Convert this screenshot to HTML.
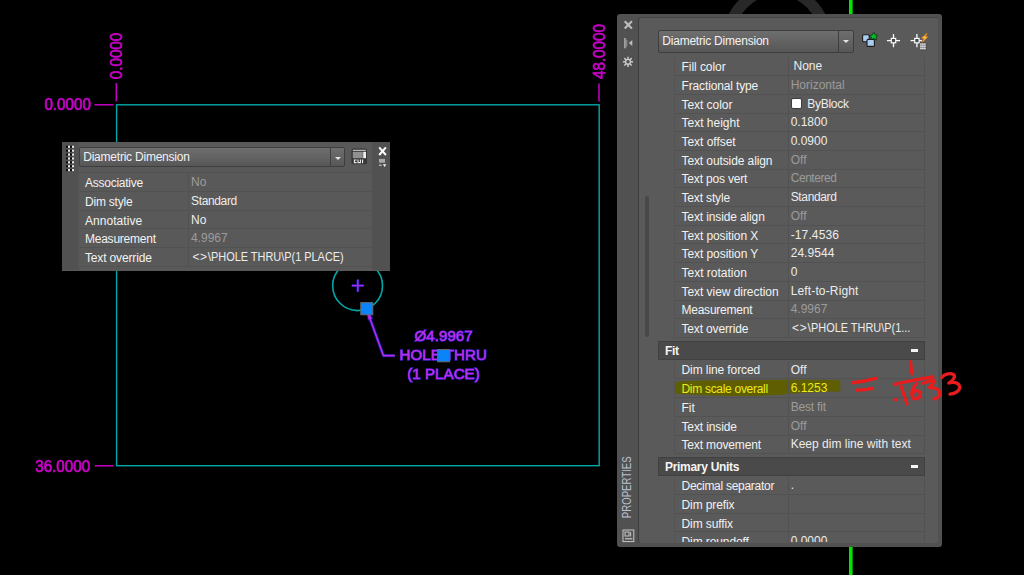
<!DOCTYPE html>
<html>
<head>
<meta charset="utf-8">
<title>AutoCAD - Diametric Dimension</title>
<style>
html,body{margin:0;padding:0;background:#000;}
body{width:1024px;height:575px;overflow:hidden;position:relative;font-family:"Liberation Sans",sans-serif;font-size:12px;color:#f0f0f0;}
#draw{position:absolute;left:0;top:0;width:1024px;height:575px;will-change:transform;}
#anno{position:absolute;left:0;top:0;width:1024px;height:575px;pointer-events:none;}
.dim{font-family:"Liberation Sans",sans-serif;font-size:15.2px;fill:#c800c8;stroke:#c800c8;stroke-width:0.7px;}
.selh{font-family:"Liberation Sans",sans-serif;font-size:15.2px;fill:#1616b0;stroke:#1616b0;stroke-width:1.7px;}
.sel{font-family:"Liberation Sans",sans-serif;font-size:15.2px;fill:#ba2ee6;stroke:#ba2ee6;stroke-width:0.45px;}

/* generic rows */
.row{position:absolute;height:17.7px;border-bottom:1px solid #525252;border-right:1px solid #525252;border-left:1px solid #545454;margin-left:-1px;box-sizing:content-box;white-space:nowrap;}
.row .l,.row .v{position:absolute;top:0.8px;line-height:19px;font-size:12px;color:#f2f2f2;}
.row .v{color:#ececec;top:-0.2px;}
.row .v.ro{color:#9c9c9c;}
.row .sep{position:absolute;top:0;width:1px;height:18.7px;background:#525252;}
.row.hl .l,.row.hl .v{color:#ecea18;}
.sq{display:inline-block;transform:scaleX(0.91);transform-origin:0 50%;}
.sw{display:inline-block;width:9px;height:9px;background:#fff;border:1px solid #3c3c3c;border-radius:2px;vertical-align:-1px;margin:0 5px 0 0.6px;}

/* Quick properties */
#qp{position:absolute;left:62px;top:141.8px;width:328.2px;height:128.8px;background:#595959;}
#qp .lstrip{position:absolute;left:0;top:0;width:17px;height:128px;background:#515151;}
#qp .rstrip{position:absolute;left:310px;top:0;width:18px;height:128px;background:#515151;}
.combo{position:absolute;box-sizing:border-box;border:1px solid #3e3e3e;border-radius:2px;background:linear-gradient(#6e6e6e,#575757);}
.combo .t{position:absolute;left:4px;top:0;font-size:12px;color:#f2f2f2;white-space:nowrap;}
.combo .btn{position:absolute;right:0;top:0;bottom:0;width:13px;border-left:1px solid #3e3e3e;}
.combo .btn:after{content:"";position:absolute;left:4px;top:9px;border-left:3px solid transparent;border-right:3px solid transparent;border-top:3px solid #e6e6e6;}

/* Properties palette */
#pp{position:absolute;left:617px;top:14px;width:325px;height:533px;background:#515151;border-radius:3px;}
#pp .inner{position:absolute;left:20.6px;top:2.6px;width:299.6px;height:525.6px;background:#5a5a5a;border-left:1.4px solid #3d3d3d;border-top:1.4px solid #444;border-radius:3px 2px 3px 3px;overflow:hidden;}
#pp .clip{position:absolute;left:0;top:0;width:325px;height:528px;overflow:hidden;}
.hdr{position:absolute;left:41px;width:265.4px;height:17.1px;background:#4a4a4a;border:1px solid #404040;box-sizing:content-box;}
.hdr span{position:absolute;left:6px;top:0.3px;line-height:18px;font-weight:bold;font-size:12px;color:#f4f4f4;letter-spacing:-0.3px;}
.hdr i{position:absolute;right:6.6px;top:7.3px;width:6.4px;height:2.5px;background:#f4f4f4;}
.sbar{position:absolute;left:28px;top:182px;width:4px;height:141px;background:#484848;border-radius:2px;}
.vt{position:absolute;left:-28px;top:476px;width:80px;height:14px;line-height:14px;font-size:11.5px;color:#b4bcd0;transform:rotate(-90deg);transform-origin:50% 50%;text-align:left;letter-spacing:0.2px;}
</style>
</head>
<body>

<svg id="draw" width="1024" height="575" viewBox="0 0 1024 575">
  <!-- dark ring behind palette -->
  <circle cx="777" cy="37.7" r="48" fill="none" stroke="#282828" stroke-width="11"/>
  <!-- green line -->
  <rect x="849" y="0" width="3.6" height="575" fill="#00e400"/>
  <!-- plate outline -->
  <rect x="116.6" y="104.8" width="482.6" height="360.9" fill="none" stroke="#00a8a8" stroke-width="1.4"/>
  <!-- ordinate dims -->
  <g stroke="#c400c4" stroke-width="1.5" fill="none">
    <line x1="94.5" y1="104.8" x2="113.5" y2="104.8"/>
    <line x1="116.3" y1="83" x2="116.3" y2="101.5"/>
    <line x1="599" y1="83.5" x2="599" y2="101.5"/>
    <line x1="94.8" y1="465.8" x2="113.6" y2="465.8"/>
  </g>
  <text class="dim" transform="translate(44.4 110.4) scale(1 1.07)">0.0000</text>
  <text class="dim" transform="translate(35.2 471.6) scale(1 1.07)">36.0000</text>
  <text class="dim" transform="translate(122 79.2) rotate(-90) scale(1 1.07)">0.0000</text>
  <text class="dim" transform="translate(605 79) rotate(-90) scale(1 1.07)">48.0000</text>
  <!-- hole -->
  <circle cx="357.6" cy="285.7" r="24.9" fill="none" stroke="#00a8a8" stroke-width="1.6"/>
  <g stroke="#14149a" stroke-width="3" style="filter:blur(0.5px)">
    <line x1="351.8" y1="285.6" x2="363.8" y2="285.6"/>
    <line x1="357.8" y1="279.6" x2="357.8" y2="291.8"/>
  </g>
  <g stroke="#a030e4" stroke-width="1.5">
    <line x1="351.8" y1="285.6" x2="363.8" y2="285.6"/>
    <line x1="357.8" y1="279.6" x2="357.8" y2="291.8"/>
  </g>
  <!-- leader -->
  <g id="leader">
    <polyline points="369,316 383.4,355.6 394.8,355.6" fill="none" stroke="#14149a" stroke-width="3.4" stroke-linejoin="round" style="filter:blur(0.5px)"/>
    <polygon points="366.5,308.5 372.2,318.4 368.5,319.7" fill="#14149a" stroke="#14149a" stroke-width="1.8" style="filter:blur(0.5px)"/>
    <polyline points="369,316 383.4,355.6 394.8,355.6" fill="none" stroke="#b82ce4" stroke-width="1.6" stroke-linejoin="round"/>
    <polygon points="366.5,308.5 372.2,318.4 368.5,319.7" fill="#b82ce4"/>
  </g>
  <g id="seltext">
    <g style="filter:blur(0.4px)" class="selh">
      <text transform="translate(443.6 340.7) scale(1 1)" text-anchor="middle">Ø4.9967</text>
      <text transform="translate(443.2 360) scale(1 1)" text-anchor="middle">HOLE THRU</text>
      <text transform="translate(443.5 379.2) scale(1 1)" text-anchor="middle">(1 PLACE)</text>
    </g>
    <text class="sel" transform="translate(443.6 340.7) scale(1 1)" text-anchor="middle">Ø4.9967</text>
    <text class="sel" transform="translate(443.2 360) scale(1 1)" text-anchor="middle">HOLE THRU</text>
    <text class="sel" transform="translate(443.5 379.2) scale(1 1)" text-anchor="middle">(1 PLACE)</text>
  </g>
  <!-- grips -->
  <rect x="360.8" y="302.6" width="12" height="12.2" fill="#0a84fa" stroke="#6a6a6a" stroke-width="1"/>
  <rect x="437.6" y="349.6" width="12" height="12.2" fill="#0a84fa" stroke="#6a6a6a" stroke-width="1"/>
</svg>

<!-- Quick Properties -->
<div id="qp">
  <div class="lstrip"></div>
  <div class="rstrip"></div>
  <svg style="position:absolute;left:0;top:0" width="328" height="34" viewBox="62 142 328 34">
    <g>
      <rect x="66.0" y="145.8" width="2" height="2" fill="#0a0a0a"/>
      <rect x="68.0" y="145.8" width="2" height="2" fill="#e8e8e8"/>
      <rect x="70.0" y="145.8" width="2" height="2" fill="#0a0a0a"/>
      <rect x="72.0" y="145.8" width="2" height="2" fill="#e8e8e8"/>
      <rect x="66.0" y="149.7" width="2" height="2" fill="#0a0a0a"/>
      <rect x="68.0" y="149.7" width="2" height="2" fill="#e8e8e8"/>
      <rect x="70.0" y="149.7" width="2" height="2" fill="#0a0a0a"/>
      <rect x="72.0" y="149.7" width="2" height="2" fill="#e8e8e8"/>
      <rect x="66.0" y="153.6" width="2" height="2" fill="#0a0a0a"/>
      <rect x="68.0" y="153.6" width="2" height="2" fill="#e8e8e8"/>
      <rect x="70.0" y="153.6" width="2" height="2" fill="#0a0a0a"/>
      <rect x="72.0" y="153.6" width="2" height="2" fill="#e8e8e8"/>
      <rect x="66.0" y="157.5" width="2" height="2" fill="#0a0a0a"/>
      <rect x="68.0" y="157.5" width="2" height="2" fill="#e8e8e8"/>
      <rect x="70.0" y="157.5" width="2" height="2" fill="#0a0a0a"/>
      <rect x="72.0" y="157.5" width="2" height="2" fill="#e8e8e8"/>
      <rect x="66.0" y="161.3" width="2" height="2" fill="#0a0a0a"/>
      <rect x="68.0" y="161.3" width="2" height="2" fill="#e8e8e8"/>
      <rect x="70.0" y="161.3" width="2" height="2" fill="#0a0a0a"/>
      <rect x="72.0" y="161.3" width="2" height="2" fill="#e8e8e8"/>
      <rect x="66.0" y="165.2" width="2" height="2" fill="#0a0a0a"/>
      <rect x="68.0" y="165.2" width="2" height="2" fill="#e8e8e8"/>
      <rect x="70.0" y="165.2" width="2" height="2" fill="#0a0a0a"/>
      <rect x="72.0" y="165.2" width="2" height="2" fill="#e8e8e8"/>
      <rect x="66.0" y="169.1" width="2" height="2" fill="#0a0a0a"/>
      <rect x="68.0" y="169.1" width="2" height="2" fill="#e8e8e8"/>
      <rect x="70.0" y="169.1" width="2" height="2" fill="#0a0a0a"/>
      <rect x="72.0" y="169.1" width="2" height="2" fill="#e8e8e8"/>
    </g>
    <!-- CUI -->
    <rect x="351.4" y="148.6" width="15.6" height="15.6" rx="2" fill="#363636"/>
    <rect x="352.8" y="149.8" width="13" height="1" fill="#d8d8d8"/>
    <rect x="352.8" y="151.8" width="10" height="6.4" fill="#909090"/>
    <rect x="363.2" y="151.8" width="2.8" height="6.4" fill="#f0f0f0"/>
    <g fill="none" stroke="#f0f0f0" stroke-width="1.1">
      <path d="M356.6 160 H354.4 V162.6 H356.6"/>
      <path d="M358 159.6 V162.6 H360.4 V159.6"/>
      <path d="M362.6 159.6 V163.2"/>
    </g>
    <!-- X -->
    <g stroke="#ffffff" stroke-width="2" stroke-linecap="butt">
      <line x1="379.2" y1="147.3" x2="385.9" y2="155"/><line x1="385.9" y1="147.3" x2="379.2" y2="155"/>
    </g>
    <!-- options -->
    <rect x="379" y="158.9" width="6" height="3.8" fill="#a8a8a8"/>
    <rect x="379" y="164.6" width="2.6" height="1.3" fill="#c0c0c0"/>
    <polygon points="382.8,164.2 386.4,164.2 384.6,167" fill="#f0f0f0"/>
  </svg>
  <div class="combo" style="left:17px;top:5px;width:266px;height:20.4px;"><span class="t" style="left:3.2px;top:0.6px;line-height:19px;letter-spacing:-0.22px">Diametric Dimension</span><span class="btn"></span></div>
<div class="row" style="top:31.50px;left:17px;width:293px;border-top:1px solid #525252;margin-top:-1px"><span class="l" style="left:6px;letter-spacing:-0.25px">Associative</span><b class="sep" style="left:109px"></b><span class="v ro" style="left:112px;letter-spacing:0px">No</span></div>
<div class="row" style="top:50.21px;left:17px;width:293px"><span class="l" style="left:6px;letter-spacing:-0.22px">Dim style</span><b class="sep" style="left:109px"></b><span class="v" style="left:112px;letter-spacing:-0.35px">Standard</span></div>
<div class="row" style="top:68.92px;left:17px;width:293px"><span class="l" style="left:6px;letter-spacing:0.05px">Annotative</span><b class="sep" style="left:109px"></b><span class="v" style="left:112px;letter-spacing:0px">No</span></div>
<div class="row" style="top:87.63px;left:17px;width:293px"><span class="l" style="left:6px;letter-spacing:-0.24px">Measurement</span><b class="sep" style="left:109px"></b><span class="v ro" style="left:112px;letter-spacing:0px">4.9967</span></div>
<div class="row" style="top:106.34px;left:17px;width:293px"><span class="l" style="left:6px;letter-spacing:-0.15px">Text override</span><b class="sep" style="left:109px"></b><span class="v" style="left:113.4px;letter-spacing:0px"><span style="letter-spacing:0.7px">&lt;&gt;</span><span style="letter-spacing:0.1px">\</span><span class="sq">PHOLE THRU\P(1 PLACE)</span></span></div>
</div>

<!-- Properties palette -->
<div id="pp">
  <div class="inner"></div>
  <div class="clip">
  <div class="combo" style="left:40.8px;top:16.1px;width:196.6px;height:23px;"><span class="t" style="left:3.5px;line-height:21.4px;letter-spacing:-0.22px">Diametric Dimension</span><span class="btn" style="width:14px"></span></div>
  <div class="sbar"></div>
<div class="row" style="top:43.40px;left:58px;width:249.39999999999998px"><span class="l" style="left:6.5px;letter-spacing:-0.05px">Fill color</span><b class="sep" style="left:113.20000000000005px"></b><span class="v" style="left:118.50000000000004px;letter-spacing:0px">None</span></div>
<div class="row" style="top:62.11px;left:58px;width:249.39999999999998px"><span class="l" style="left:6.5px;letter-spacing:-0.14px">Fractional type</span><b class="sep" style="left:113.20000000000005px"></b><span class="v ro" style="left:115.70000000000005px;letter-spacing:0px">Horizontal</span></div>
<div class="row" style="top:80.82px;left:58px;width:249.39999999999998px"><span class="l" style="left:6.5px;letter-spacing:-0.05px">Text color</span><b class="sep" style="left:113.20000000000005px"></b><span class="v" style="left:115.70000000000005px;letter-spacing:-0.28px"><i class="sw"></i>ByBlock</span></div>
<div class="row" style="top:99.53px;left:58px;width:249.39999999999998px"><span class="l" style="left:6.5px;letter-spacing:0px">Text height</span><b class="sep" style="left:113.20000000000005px"></b><span class="v" style="left:115.70000000000005px;letter-spacing:0px">0.1800</span></div>
<div class="row" style="top:118.24px;left:58px;width:249.39999999999998px"><span class="l" style="left:6.5px;letter-spacing:-0.03px">Text offset</span><b class="sep" style="left:113.20000000000005px"></b><span class="v" style="left:115.70000000000005px;letter-spacing:0px">0.0900</span></div>
<div class="row" style="top:136.95px;left:58px;width:249.39999999999998px"><span class="l" style="left:6.5px;letter-spacing:-0.1px">Text outside align</span><b class="sep" style="left:113.20000000000005px"></b><span class="v ro" style="left:115.70000000000005px;letter-spacing:0px">Off</span></div>
<div class="row" style="top:155.66px;left:58px;width:249.39999999999998px"><span class="l" style="left:6.5px;letter-spacing:-0.18px">Text pos vert</span><b class="sep" style="left:113.20000000000005px"></b><span class="v ro" style="left:115.70000000000005px;letter-spacing:-0.45px">Centered</span></div>
<div class="row" style="top:174.37px;left:58px;width:249.39999999999998px"><span class="l" style="left:6.5px;letter-spacing:-0.16px">Text style</span><b class="sep" style="left:113.20000000000005px"></b><span class="v" style="left:115.70000000000005px;letter-spacing:-0.35px">Standard</span></div>
<div class="row" style="top:193.08px;left:58px;width:249.39999999999998px"><span class="l" style="left:6.5px;letter-spacing:-0.13px">Text inside align</span><b class="sep" style="left:113.20000000000005px"></b><span class="v ro" style="left:115.70000000000005px;letter-spacing:0px">Off</span></div>
<div class="row" style="top:211.79px;left:58px;width:249.39999999999998px"><span class="l" style="left:6.5px;letter-spacing:-0.09px">Text position X</span><b class="sep" style="left:113.20000000000005px"></b><span class="v" style="left:115.70000000000005px;letter-spacing:0.12px">-17.4536</span></div>
<div class="row" style="top:230.50px;left:58px;width:249.39999999999998px"><span class="l" style="left:6.5px;letter-spacing:-0.07px">Text position Y</span><b class="sep" style="left:113.20000000000005px"></b><span class="v" style="left:115.70000000000005px;letter-spacing:0.04px">24.9544</span></div>
<div class="row" style="top:249.21px;left:58px;width:249.39999999999998px"><span class="l" style="left:6.5px;letter-spacing:0px">Text rotation</span><b class="sep" style="left:113.20000000000005px"></b><span class="v" style="left:115.70000000000005px;letter-spacing:0px">0</span></div>
<div class="row" style="top:267.92px;left:58px;width:249.39999999999998px"><span class="l" style="left:6.5px;letter-spacing:-0.05px">Text view direction</span><b class="sep" style="left:113.20000000000005px"></b><span class="v" style="left:115.70000000000005px;letter-spacing:0.14px">Left-to-Right</span></div>
<div class="row" style="top:286.63px;left:58px;width:249.39999999999998px"><span class="l" style="left:6.5px;letter-spacing:-0.24px">Measurement</span><b class="sep" style="left:113.20000000000005px"></b><span class="v ro" style="left:115.70000000000005px;letter-spacing:0px">4.9967</span></div>
<div class="row" style="top:305.34px;left:58px;width:249.39999999999998px"><span class="l" style="left:6.5px;letter-spacing:-0.15px">Text override</span><b class="sep" style="left:113.20000000000005px"></b><span class="v" style="left:117.10000000000005px;letter-spacing:0px"><span style="letter-spacing:0.7px">&lt;&gt;</span><span style="letter-spacing:0.1px">\</span><span class="sq">PHOLE THRU\P(1...</span></span></div>
  <div class="hdr" style="top:326.8px"><span>Fit</span><i></i></div>
  <svg style="position:absolute;left:0;top:0" width="325" height="533" viewBox="617 14 325 533">
    <path d="M675.2 382 Q683 380.6 700 380.4 L790 379.8 L840.3 380 L840.3 391.5 Q815 392.2 800 392.8 Q780 395.4 760 395.8 Q725 396.4 700 395 L675.2 393.8 Z" fill="#5f5e02"/>
  </svg>
<div class="row" style="top:346.70px;left:58px;width:249.39999999999998px"><span class="l" style="left:6.5px;letter-spacing:-0.09px">Dim line forced</span><b class="sep" style="left:113.20000000000005px"></b><span class="v" style="left:115.70000000000005px;letter-spacing:0px">Off</span></div>
<div class="row hl" style="top:365.41px;left:58px;width:249.39999999999998px"><span class="l" style="left:6.5px;letter-spacing:-0.3px">Dim scale overall</span><b class="sep" style="left:113.20000000000005px"></b><span class="v" style="left:115.70000000000005px;letter-spacing:0px">6.1253</span></div>
<div class="row" style="top:384.12px;left:58px;width:249.39999999999998px"><span class="l" style="left:6.5px;letter-spacing:0px">Fit</span><b class="sep" style="left:113.20000000000005px"></b><span class="v ro" style="left:115.70000000000005px;letter-spacing:-0.2px">Best fit</span></div>
<div class="row" style="top:402.83px;left:58px;width:249.39999999999998px"><span class="l" style="left:6.5px;letter-spacing:-0.13px">Text inside</span><b class="sep" style="left:113.20000000000005px"></b><span class="v ro" style="left:115.70000000000005px;letter-spacing:0px">Off</span></div>
<div class="row" style="top:421.54px;left:58px;width:249.39999999999998px"><span class="l" style="left:6.5px;letter-spacing:-0.15px">Text movement</span><b class="sep" style="left:113.20000000000005px"></b><span class="v" style="left:115.70000000000005px;letter-spacing:0px">Keep dim line with text</span></div>
  <div class="hdr" style="top:443.2px"><span>Primary Units</span><i></i></div>
<div class="row" style="top:462.30px;left:58px;width:249.39999999999998px"><span class="l" style="left:6.5px;letter-spacing:-0.28px">Decimal separator</span><b class="sep" style="left:113.20000000000005px"></b><span class="v" style="left:115.70000000000005px;letter-spacing:0px">.</span></div>
<div class="row" style="top:481.01px;left:58px;width:249.39999999999998px"><span class="l" style="left:6.5px;letter-spacing:-0.1px">Dim prefix</span><b class="sep" style="left:113.20000000000005px"></b><span class="v" style="left:115.70000000000005px;letter-spacing:0px"></span></div>
<div class="row" style="top:499.72px;left:58px;width:249.39999999999998px"><span class="l" style="left:6.5px;letter-spacing:-0.1px">Dim suffix</span><b class="sep" style="left:113.20000000000005px"></b><span class="v" style="left:115.70000000000005px;letter-spacing:0px"></span></div>
<div class="row" style="top:518.43px;left:58px;width:249.39999999999998px"><span class="l" style="left:6.5px;letter-spacing:-0.1px">Dim roundoff</span><b class="sep" style="left:113.20000000000005px"></b><span class="v" style="left:115.70000000000005px;letter-spacing:0px">0.0000</span></div>
  </div>

  <svg style="position:absolute;left:0;top:0" width="325" height="60" viewBox="617 14 325 60">
    <!-- close X -->
    <g stroke="#bebebe" stroke-width="2.1" stroke-linecap="butt">
      <line x1="624.7" y1="21.2" x2="631.9" y2="28.4"/><line x1="631.9" y1="21.2" x2="624.7" y2="28.4"/>
    </g>
    <!-- auto-hide -->
    <rect x="624.2" y="38" width="1.5" height="10.3" fill="#b4b4b4"/>
    <polygon points="625.7,38.4 627.4,40.4 627.4,46 625.7,48" fill="#848484"/>
    <polygon points="632.3,40 632.3,46 628.9,43" fill="#bdbdbd"/>
    <!-- gear -->
    <g stroke="#c8c8c8" stroke-width="1.5">
      <line x1="628" y1="56.7" x2="628" y2="66.9"/><line x1="622.9" y1="61.8" x2="633.1" y2="61.8"/>
      <line x1="624.3" y1="58.1" x2="631.7" y2="65.5"/><line x1="631.7" y1="58.1" x2="624.3" y2="65.5"/>
    </g>
    <circle cx="628" cy="61.8" r="3.1" fill="#c8c8c8"/>
    <circle cx="628" cy="61.8" r="1.7" fill="#515151"/>
    <!-- pickadd -->
    <rect x="862.6" y="34.8" width="6.6" height="7" rx="1" fill="#a8cdf0" stroke="#1c1c1c" stroke-width="1.1"/>
    <rect x="867" y="39.4" width="7.4" height="7" rx="1" fill="#a8cdf0" stroke="#1c1c1c" stroke-width="1.1"/>
    <path d="M873.8 32.2 L875.2 34.8 L877.6 35.2 L876 37 L876.6 39.8 L873.8 38.6 L871.2 39.6 L871.4 37 L869.6 35.6 L872.4 34.8 Z" fill="#00c020" stroke="#103010" stroke-width="0.8"/>
    <!-- select objects -->
    <g stroke="#fafafa" stroke-width="1.3" fill="none">
      <line x1="887" y1="40.6" x2="900" y2="40.6"/><line x1="893.5" y1="34.1" x2="893.5" y2="47.2"/>
    </g>
    <rect x="891.3" y="38.4" width="4.4" height="4.4" fill="#4a4a4a" stroke="#fafafa" stroke-width="1.2"/>
    <!-- quick select -->
    <g stroke="#fafafa" stroke-width="1.3" fill="none">
      <line x1="910.6" y1="40.6" x2="922" y2="40.6"/><line x1="916.9" y1="34.1" x2="916.9" y2="47.2"/>
    </g>
    <rect x="914.7" y="38.4" width="4.4" height="4.4" fill="#4a4a4a" stroke="#fafafa" stroke-width="1.2"/>
    <path d="M927 33.4 L921.6 38 L924 38.6 L922.2 42.4 L927.6 37 L925.2 36.6 Z" fill="#ffc050" stroke="#e08818" stroke-width="0.9" stroke-linejoin="round"/>
    <rect x="919.8" y="42.9" width="6.2" height="6.9" rx="0.8" fill="#ffffff" stroke="#3a3a3a" stroke-width="0.7"/>
    <g stroke="#4a4a4a" stroke-width="0.5">
      <line x1="920" y1="45.2" x2="926" y2="45.2"/><line x1="920" y1="47.4" x2="926" y2="47.4"/>
      <line x1="921.9" y1="43" x2="921.9" y2="49.8"/><line x1="923.9" y1="43" x2="923.9" y2="49.8"/>
    </g>
  </svg>
  <svg style="position:absolute;left:4.8px;top:515.2px" width="14" height="14" viewBox="0 0 14 14">
    <rect x="1" y="1" width="10.8" height="11.6" fill="none" stroke="#c8c8c8" stroke-width="1"/>
    <rect x="3" y="3" width="4" height="4" fill="none" stroke="#c8c8c8" stroke-width="1"/>
    <line x1="8.6" y1="3" x2="8.6" y2="7.5" stroke="#c8c8c8" stroke-width="1"/>
    <line x1="3" y1="9.8" x2="10.4" y2="9.8" stroke="#c8c8c8" stroke-width="1.2"/>
  </svg>
  <svg style="position:absolute;left:0;top:430px" width="22" height="100" viewBox="617 444 22 100"><text transform="translate(631.2 518.2) rotate(-90)" font-family="Liberation Sans, sans-serif" font-size="12.4" fill="#b9c0d2" textLength="61.8" lengthAdjust="spacingAndGlyphs">PROPERTIES</text></svg>
</div>

<svg id="anno" width="1024" height="575" viewBox="0 0 1024 575">
  <g fill="none" stroke="#e81c1c" stroke-width="3.3" stroke-linecap="round" stroke-linejoin="round">
    <path d="M852.8 382.6 Q865 381.6 876 378.4"/>
    <path d="M856.8 390.2 Q865 389.8 872.6 388.4"/>
    <path d="M910.6 361.6 Q910.8 368 912 373.6"/>
    <path d="M894.4 384.3 Q915 379.4 932.8 376.8"/>
    <path d="M901.2 386.8 L907 404"/>
    <path d="M916.8 383.4 C912.5 387 911 392.5 912.2 396.5 C913.5 400 918.5 399.6 920 396 C921.2 392.6 918.5 389.8 915.4 390.8 C913.6 391.6 912.6 393.4 912.6 394.6"/>
    <path d="M923 383.2 Q929 381 934.2 380.2 C933.5 383.5 931.5 386 929.4 387.6 C934 387.4 939 388.6 939.8 392.6 C940.4 396 937.6 398.4 934 398.8"/>
    <path d="M941.8 377.4 C944 374.6 949 372.6 953.2 374.2 C956.2 376 953 381 948.8 383 C953 381.8 958.6 382.2 959.6 386.4 C960.2 390.6 955.6 393.6 950 394.2"/>
  </g>
  <circle cx="895.8" cy="399.6" r="1.9" fill="#e81c1c"/>
</svg>

</body>
</html>
